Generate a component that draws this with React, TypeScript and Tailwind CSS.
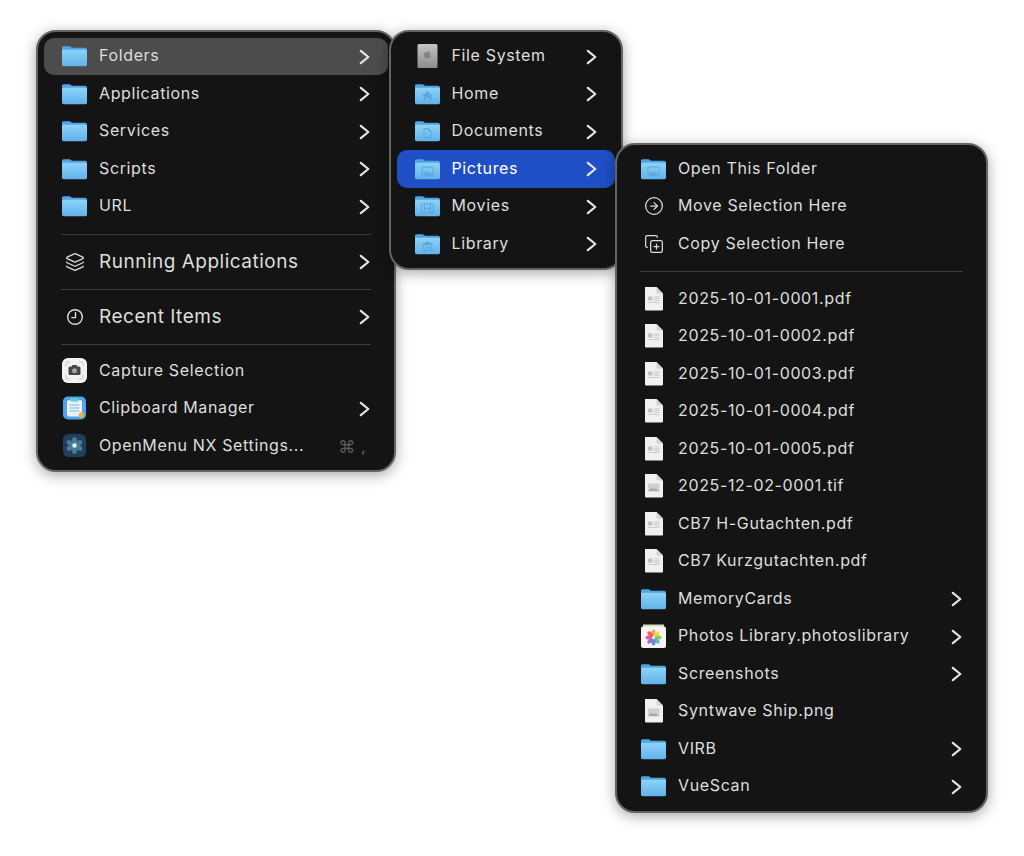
import React from 'react';
import { Layers, CircleArrowRight, CopyPlus } from 'lucide-react';

type Glyph = 'home' | 'doc' | 'picture' | 'movie' | 'library';

function Folder({ glyph, id }: { glyph?: Glyph; id: string }) {
  return (
    <svg width="27" height="22" viewBox="0 0 27 22" className="shrink-0">
      <defs>
        <linearGradient id={id} x1="0" y1="0" x2="0" y2="1">
          <stop offset="0" stopColor="#8fd2f8" />
          <stop offset="1" stopColor="#5fb2ea" />
        </linearGradient>
      </defs>
      <path d="M1 3.500A2 2 0 0 1 3 1.200h5.500c1.200 0 1.600 1.600 3 1.600H24a2 2 0 0 1 2 2V8H1z" fill="#4fa5e2" />
      <path d="M1 6.200c0-.8.700-1.400 1.400-1.400h22.200c.8 0 1.400.6 1.400 1.400v13.400c0 1-.8 1.700-1.700 1.700H2.700c-1 0-1.700-.8-1.700-1.700z" fill={`url(#${id})`} />
      {glyph === 'home' && <path d="M13.500 8l-5.500 5h1.600v4.600h2.800v-3h2.200v3h2.800V13H19z" fill="#5ba8dc" />}
      {glyph === 'doc' && <path d="M10 8.500h4.500l2.500 2.600v6.600h-7z M14.500 8.500v2.600H17" fill="none" stroke="#5ba8dc" strokeWidth="1" />}
      {glyph === 'picture' && (
        <g>
          <rect x="8" y="9" width="11" height="8.600" rx="1" fill="none" stroke="#5ba8dc" strokeWidth="1" />
          <path d="M8.500 17l3.200-3.400 2.200 2 1.500-1.300 3 2.700z" fill="#5ba8dc" />
        </g>
      )}
      {glyph === 'movie' && (
        <g fill="none" stroke="#5ba8dc" strokeWidth="1">
          <rect x="7.500" y="8.800" width="12" height="9" rx="1" />
          <path d="M10.500 8.800v9M16.500 8.800v9M10.500 13.300h6" />
        </g>
      )}
      {glyph === 'library' && <path d="M13.500 8.200L8 11v1h11v-1zM9 12.800h1.600v3.600H9zM12.700 12.800h1.600v3.600h-1.600zM16.400 12.800H18v3.600h-1.600zM8 17h11v1H8z" fill="#5ba8dc" />}
    </svg>
  );
}

function DiskIcon() {
  return (
    <svg width="27" height="26" viewBox="0 0 27 26" className="shrink-0">
      <defs>
        <linearGradient id="disk" x1="0" y1="0" x2="0" y2="1">
          <stop offset="0" stopColor="#c4c4c4" />
          <stop offset="1" stopColor="#8c8c8c" />
        </linearGradient>
      </defs>
      <rect x="3.500" y="1" width="20" height="24" rx="1.500" fill="url(#disk)" />
      <path d="M15 9.200c.6-.1 1.300.2 1.700.7-1.200.8-1 2.400.2 3-.4 1.100-1.100 2.300-2 2.300-.6 0-.9-.3-1.500-.3s-.9.3-1.500.3c-1.200 0-2.400-2.600-2-4.300.3-1.500 2-2.200 3.500-1.600.6.2 1 .1 1.600-.1zM13.800 9c0-1 .7-1.700 1.500-1.800.1 1-.6 1.800-1.500 1.800z" fill="#858585" />
    </svg>
  );
}

function FileIcon({ kind }: { kind: 'pdf' | 'image' }) {
  return (
    <svg width="27" height="26" viewBox="0 0 27 26" className="shrink-0">
      <path d="M5 1h11.500L23 7.500V23.500a1 1 0 0 1-1 1H6a1 1 0 0 1-1-1z" fill="#f1f1f1" />
      <path d="M16.500 1V6.500a1 1 0 0 0 1 1H23z" fill="#d4d4d4" />
      {kind === 'pdf' ? (
        <g fill="#c2c2c2">
          <rect x="8" y="10.500" width="4.500" height="4" />
          <rect x="14" y="10.500" width="5.500" height="0.800" />
          <rect x="14" y="12.300" width="5.500" height="0.800" />
          <rect x="14" y="14" width="5.500" height="0.800" />
          <rect x="8" y="16" width="11.500" height="0.800" />
        </g>
      ) : (
        <g>
          <rect x="8" y="10.500" width="11.500" height="8" fill="#d0d0d0" />
          <path d="M8.500 18l3-3.500 2.500 2 1.500-1.300 3.500 2.800z" fill="#a8a8a8" />
        </g>
      )}
    </svg>
  );
}

function CaptureIcon() {
  return (
    <svg width="27" height="27" viewBox="0 0 27 27" className="shrink-0">
      <rect x="1" y="1" width="25" height="25" rx="6" fill="#f2f2f2" />
      <path d="M5 9V6.500A1.500 1.500 0 0 1 6.500 5H9M18 5h2.500A1.500 1.500 0 0 1 22 6.500V9M22 18v2.500a1.500 1.500 0 0 1-1.500 1.500H18M9 22H6.500A1.500 1.500 0 0 1 5 20.500V18" fill="none" stroke="#c4c4c4" strokeWidth="1" />
      <rect x="7.500" y="9.500" width="12" height="8.500" rx="1.500" fill="#444" />
      <rect x="11" y="8" width="5" height="2.500" rx="0.800" fill="#444" />
      <circle cx="13.500" cy="13.700" r="2.500" fill="#a2a2a2" />
    </svg>
  );
}

function ClipboardIcon() {
  return (
    <svg width="27" height="27" viewBox="0 0 27 27" className="shrink-0">
      <rect x="2" y="1.500" width="23" height="23" rx="5" fill="#4ea4ec" />
      <rect x="6" y="5" width="15" height="16.500" rx="2" fill="#e8f2fb" />
      <rect x="9" y="3" width="9" height="3.500" rx="1.500" fill="#5fd0c8" />
      <path d="M8.500 10h10M8.500 13h10M8.500 16h10" stroke="#7fb8ea" strokeWidth="1" />
      <circle cx="20.500" cy="20" r="2.800" fill="#f5ad3c" />
    </svg>
  );
}

function OpenMenuIcon() {
  return (
    <svg width="27" height="27" viewBox="0 0 27 27" className="shrink-0">
      <rect x="2" y="2" width="23" height="23" rx="5.500" fill="#1f3f5c" />
      <g fill="#5f9cb4" opacity="0.65">
        <ellipse cx="13.500" cy="8.500" rx="2.500" ry="3.500" />
        <ellipse cx="13.500" cy="18.500" rx="2.500" ry="3.500" />
        <ellipse cx="9" cy="11" rx="3.500" ry="2.500" transform="rotate(30 9 11)" />
        <ellipse cx="18" cy="11" rx="3.500" ry="2.500" transform="rotate(-30 18 11)" />
        <ellipse cx="9" cy="16" rx="3.500" ry="2.500" transform="rotate(-30 9 16)" />
        <ellipse cx="18" cy="16" rx="3.500" ry="2.500" transform="rotate(30 18 16)" />
      </g>
      <circle cx="13.500" cy="13.500" r="2.200" fill="#e9f6fb" />
    </svg>
  );
}

function PhotosIcon() {
  const petals = ['#f2a33a', '#f5d33f', '#7fc84a', '#4bb7b0', '#5a7fd8', '#9a5fc8', '#d8509c', '#e8524a'];
  return (
    <svg width="27" height="26" viewBox="0 0 27 26" className="shrink-0">
      <path d="M3 1.500h21v4H3z" fill="#cfe3b8" />
      <rect x="1" y="3.500" width="25" height="21.500" rx="2" fill="#f4f4f4" />
      {petals.map((c, i) => (
        <ellipse key={c} cx="13.500" cy="9.800" rx="2" ry="3.300" fill={c} opacity="0.9" transform={`rotate(${i * 45} 13.500 14.500)`} />
      ))}
    </svg>
  );
}

function ClockIcon() {
  return (
    <svg width="18" height="18" viewBox="0 0 18 18" fill="none" stroke="#dcdcdc" strokeWidth="1.400" strokeLinecap="round" strokeLinejoin="round">
      <circle cx="9" cy="9" r="7.300" />
      <path d="M9.500 4.800V9.600H5.800" />
    </svg>
  );
}

function Chevron({ big }: { big?: boolean }) {
  return (
    <svg
      width="11"
      height="16"
      viewBox="0 0 11 16"
      fill="none"
      stroke="#e4e4e4"
      strokeWidth="2.200"
      strokeLinecap="round"
      strokeLinejoin="round"
      className={`absolute right-[18px] ${big ? 'top-[10.500px]' : 'top-[11px]'}`}
    >
      <path d="M1.800 1.800L9.300 8L1.800 14.200" />
    </svg>
  );
}

function Row({ icon, label, more, active, big, tail }: {
  icon: React.ReactNode;
  label: string;
  more?: boolean;
  active?: 'gray' | 'blue';
  big?: boolean;
  tail?: React.ReactNode;
}) {
  const bg = active === 'gray' ? 'bg-[#4c4c4c]' : active === 'blue' ? 'bg-[#1f4fc4]' : '';
  return (
    <div className={`relative flex items-center h-[37.5px] rounded-[10px] pl-[17px] ${bg}`}>
      <div className="w-[27px] h-[27px] flex items-center justify-center shrink-0">{icon}</div>
      <span className={`ml-[11px] whitespace-nowrap ${big ? 'text-[19px] tracking-[0.5px]' : 'text-[16px] -mt-[2px] tracking-[0.64px]'} ${active === 'blue' ? 'text-white' : 'text-[#dedede]'}`}>{label}</span>
      {tail}
      {more && <Chevron big={big} />}
    </div>
  );
}

function Sep({ className }: { className: string }) {
  return <div className={`h-[1px] ml-[17px] mr-[17px] bg-[#3c3c3c] ${className}`} />;
}

function Panel({ className, children }: { className: string; children: React.ReactNode }) {
  return (
    <div className={`absolute rounded-[20px] border-[2px] border-[#646464] bg-[#141414] px-[6px] shadow-[0_3px_14px_rgba(0,0,0,0.35)] ${className}`}>
      {children}
    </div>
  );
}

const pdfs = [
  '2025-10-01-0001.pdf',
  '2025-10-01-0002.pdf',
  '2025-10-01-0003.pdf',
  '2025-10-01-0004.pdf',
  '2025-10-01-0005.pdf',
];

export default function App() {
  return (
    <div className="relative w-[1024px] h-[856px] bg-white overflow-hidden font-['Inter',sans-serif]">
      <Panel className="left-[36px] top-[30px] w-[360px] h-[442px] pt-[5.500px]">
        <Row active="gray" more label="Folders" icon={<Folder id="a1" />} />
        <Row more label="Applications" icon={<Folder id="a2" />} />
        <Row more label="Services" icon={<Folder id="a3" />} />
        <Row more label="Scripts" icon={<Folder id="a4" />} />
        <Row more label="URL" icon={<Folder id="a5" />} />
        <Sep className="mt-[9px] mb-[8.500px]" />
        <Row big more label="Running Applications" icon={<Layers size={20} strokeWidth={1.5} className="text-[#dcdcdc]" />} />
        <Sep className="mt-[8px] mb-[8.500px]" />
        <Row big more label="Recent Items" icon={<ClockIcon />} />
        <Sep className="mt-[8px] mb-[7px]" />
        <Row label="Capture Selection" icon={<CaptureIcon />} />
        <Row more label="Clipboard Manager" icon={<ClipboardIcon />} />
        <Row
          label="OpenMenu NX Settings..."
          icon={<OpenMenuIcon />}
          tail={<span className="absolute right-[22px] top-[8px] text-[17px] text-[#5c5c5c] font-['DejaVu_Sans',sans-serif]">⌘ ,</span>}
        />
      </Panel>

      <Panel className="left-[388.500px] top-[30px] w-[234.500px] h-[240px] pt-[5.500px]">
        <Row more label="File System" icon={<DiskIcon />} />
        <Row more label="Home" icon={<Folder id="b1" glyph="home" />} />
        <Row more label="Documents" icon={<Folder id="b2" glyph="doc" />} />
        <Row active="blue" more label="Pictures" icon={<Folder id="b3" glyph="picture" />} />
        <Row more label="Movies" icon={<Folder id="b4" glyph="movie" />} />
        <Row more label="Library" icon={<Folder id="b5" glyph="library" />} />
      </Panel>

      <Panel className="left-[615px] top-[143px] w-[373px] h-[670px] pt-[5px]">
        <Row label="Open This Folder" icon={<Folder id="c1" glyph="picture" />} />
        <Row label="Move Selection Here" icon={<CircleArrowRight size={20} strokeWidth={1.5} className="text-[#dcdcdc]" />} />
        <Row label="Copy Selection Here" icon={<CopyPlus size={20} strokeWidth={1.5} className="text-[#dcdcdc]" />} />
        <Sep className="mt-[8px] mb-[8.500px]" />
        {pdfs.map((name) => (
          <Row key={name} label={name} icon={<FileIcon kind="pdf" />} />
        ))}
        <Row label="2025-12-02-0001.tif" icon={<FileIcon kind="image" />} />
        <Row label="CB7 H-Gutachten.pdf" icon={<FileIcon kind="pdf" />} />
        <Row label="CB7 Kurzgutachten.pdf" icon={<FileIcon kind="pdf" />} />
        <Row more label="MemoryCards" icon={<Folder id="c2" />} />
        <Row more label="Photos Library.photoslibrary" icon={<PhotosIcon />} />
        <Row more label="Screenshots" icon={<Folder id="c3" />} />
        <Row label="Syntwave Ship.png" icon={<FileIcon kind="image" />} />
        <Row more label="VIRB" icon={<Folder id="c4" />} />
        <Row more label="VueScan" icon={<Folder id="c5" />} />
      </Panel>
    </div>
  );
}
